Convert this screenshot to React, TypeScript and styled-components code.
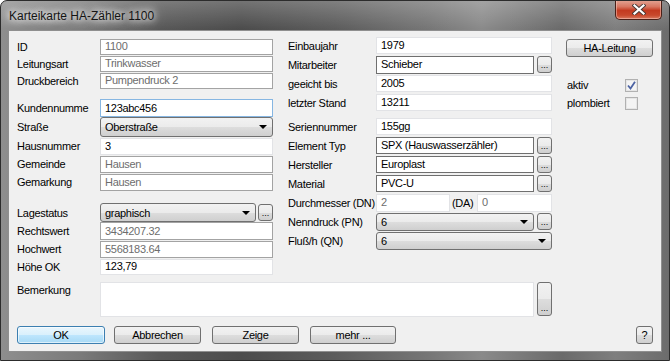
import React from "react";
import styled, { createGlobalStyle, css } from "styled-components";

const GlobalStyle = createGlobalStyle`
  html, body {
    margin: 0;
    padding: 0;
    background: #ffffff;
  }
  body {
    font-family: "Liberation Sans", Arial, sans-serif;
    font-size: 11px;
    letter-spacing: -0.3px;
    color: #000;
  }
`;

const win7Gradient = css`
  background: linear-gradient(
    180deg,
    #f2f2f2 0%,
    #ebebeb 50%,
    #dddddd 51%,
    #cfcfcf 100%
  );
`;

const WindowFrame = styled.div`
  box-sizing: border-box;
  width: 670px;
  height: 361px;
  border: 1px solid #2c2c2c;
  border-radius: 7px 7px 0 0;
  background: linear-gradient(
      180deg,
      rgba(255, 255, 255, 0.22) 0px,
      rgba(255, 255, 255, 0) 28px
    ),
    linear-gradient(
      90deg,
      #8e8e8e 0%,
      #7a7a7a 12%,
      #575757 24%,
      #4c4c4c 36%,
      #5c5c5c 50%,
      #767676 64%,
      #8a8a8a 72%,
      #6a6a6a 84%,
      #7e7e7e 92%,
      #6c6c6c 100%
    );
  display: flex;
  flex-direction: column;
  padding: 0 7px 8px 7px;
  overflow: hidden;
`;

const TitleBar = styled.div`
  height: 29px;
  display: flex;
  align-items: flex-start;
`;

const TitleText = styled.div`
  font-family: "Liberation Sans", Arial, sans-serif;
  font-size: 12px;
  letter-spacing: 0;
  color: #141414;
  padding: 8px 0 0 1px;
  text-shadow: 0 0 6px #ffffff, 0 0 10px rgba(255, 255, 255, 0.9),
    0 0 14px rgba(255, 255, 255, 0.7);
`;

const CloseButton = styled.div`
  margin-left: auto;
  margin-top: -1px;
  width: 47px;
  height: 20px;
  box-sizing: border-box;
  border: 1px solid #4a2018;
  border-top: none;
  border-radius: 0 0 5px 5px;
  background: linear-gradient(
    180deg,
    #e3a696 0%,
    #d77762 35%,
    #c33a20 55%,
    #c8482c 80%,
    #d87a60 100%
  );
  box-shadow: inset 0 0 0 1px rgba(255, 220, 210, 0.45);
  display: flex;
  align-items: center;
  justify-content: center;
`;

const Client = styled.div`
  flex: 1;
  box-sizing: border-box;
  background: #f0f0f0;
  border: 1px solid #8f8f8f;
  padding: 5px 8px 0 8px;
  display: flex;
  flex-direction: column;
`;

const TopArea = styled.div`
  display: flex;
  align-items: flex-start;
`;

const Column = styled.div<{ $w: number; $ml?: number }>`
  width: ${(p) => p.$w}px;
  margin-left: ${(p) => p.$ml ?? 0}px;
  display: flex;
  flex-direction: column;
`;

const Spacer = styled.div<{ $h: number }>`
  height: ${(p) => p.$h}px;
  flex: none;
`;

const Row = styled.div<{ $h: number }>`
  height: ${(p) => p.$h}px;
  display: flex;
  align-items: center;
`;

const Label = styled.div<{ $w: number }>`
  width: ${(p) => p.$w}px;
  flex: none;
  white-space: nowrap;
`;

type FieldKind = "locked" | "plain" | "focus" | "dark";

const fieldBorders: Record<FieldKind, string> = {
  locked: "#a3a3a3",
  plain: "#e2e3e6",
  focus: "#86b6e2",
  dark: "#6f6f6f",
};

const Field = styled.div<{ $kind: FieldKind; $h: number; $w?: number }>`
  box-sizing: border-box;
  ${(p) => (p.$w ? `width: ${p.$w}px; flex: none;` : "flex: 1;")}
  height: ${(p) => p.$h}px;
  background: #ffffff;
  border: 1px solid ${(p) => fieldBorders[p.$kind]};
  color: ${(p) => (p.$kind === "locked" ? "#6d6d6d" : "#000")};
  padding: 0 0 1px 4px;
  display: flex;
  align-items: center;
  white-space: nowrap;
  overflow: hidden;
`;

const GrayText = styled.span`
  color: #6d6d6d;
`;

const Combo = styled.div<{ $h: number }>`
  box-sizing: border-box;
  flex: 1;
  height: ${(p) => p.$h}px;
  border: 1px solid #707070;
  border-radius: 3px;
  ${win7Gradient}
  padding: 0 0 0 4px;
  display: flex;
  align-items: center;
  white-space: nowrap;
`;

const Arrow = styled.span`
  margin-left: auto;
  margin-right: 5px;
  width: 0;
  height: 0;
  border-left: 4px solid transparent;
  border-right: 4px solid transparent;
  border-top: 4px solid #000;
`;

const DotsButton = styled.div<{ $h: number; $gap?: number }>`
  box-sizing: border-box;
  flex: none;
  width: 15px;
  height: ${(p) => p.$h}px;
  margin-left: ${(p) => p.$gap ?? 3}px;
  border: 1px solid #707070;
  border-radius: 3px;
  ${win7Gradient}
  display: flex;
  align-items: flex-end;
  justify-content: center;
  font-size: 9px;
  letter-spacing: 0;
  line-height: 9px;
  padding-bottom: 2px;
  color: #000;
`;

const PushButton = styled.div<{ $w: number; $primary?: boolean; $ml?: number }>`
  box-sizing: border-box;
  flex: none;
  width: ${(p) => p.$w}px;
  height: 18px;
  margin-left: ${(p) => p.$ml ?? 0}px;
  border: 1px solid ${(p) => (p.$primary ? "#3c7fb1" : "#707070")};
  border-radius: 3px;
  ${(p) =>
    p.$primary
      ? css`
          background: linear-gradient(
            180deg,
            #eaf6fd 0%,
            #d9f0fc 50%,
            #bee6fd 51%,
            #a7d9f5 100%
          );
          box-shadow: inset 0 0 0 1px rgba(255, 255, 255, 0.6);
        `
      : win7Gradient}
  display: flex;
  align-items: center;
  justify-content: center;
  padding-bottom: 1px;
  white-space: nowrap;
`;

const CheckRow = styled.div`
  height: 18px;
  display: flex;
  align-items: center;
  padding-left: 1px;
`;

const CheckBox = styled.div`
  box-sizing: border-box;
  margin-left: auto;
  margin-right: 15px;
  width: 13px;
  height: 13px;
  border: 1px solid #b1b1b1;
  background: #f4f4f4;
  box-shadow: inset 0 0 0 1px #e6e6e6;
  display: flex;
  align-items: center;
  justify-content: center;
`;

const RemarkRow = styled.div`
  display: flex;
  align-items: flex-start;
  margin-top: 7px;
  height: 35px;
`;

const RemarkLabel = styled.div`
  width: 83px;
  flex: none;
  padding-top: 2px;
`;

const ButtonBar = styled.div`
  display: flex;
  align-items: center;
  margin-top: 9px;
`;

const SmallCombo = ({ text, h }: { text: string; h: number }) => (
  <Combo $h={h}>
    {text}
    <Arrow />
  </Combo>
);

const Dots = ({ h, gap }: { h: number; gap?: number }) => (
  <DotsButton $h={h} $gap={gap}>
    ...
  </DotsButton>
);

const L = 83;
const M = 88;

export default function App() {
  return (
    <>
      <GlobalStyle />
      <WindowFrame>
        <TitleBar>
          <TitleText>Karteikarte HA-Zähler 1100</TitleText>
          <CloseButton>
            <svg width="14" height="11" viewBox="0 0 14 11">
              <path
                d="M2.5 1.5 L11.5 9.5 M11.5 1.5 L2.5 9.5"
                stroke="#4a3a36"
                strokeWidth="4"
                strokeLinecap="square"
              />
              <path
                d="M2.5 1.5 L11.5 9.5 M11.5 1.5 L2.5 9.5"
                stroke="#ffffff"
                strokeWidth="2.2"
                strokeLinecap="square"
              />
            </svg>
          </CloseButton>
        </TitleBar>
        <Client>
          <TopArea>
            <Column $w={256}>
              <Spacer $h={2} />
              <Row $h={17}>
                <Label $w={L}>ID</Label>
                <Field $kind="locked" $h={16}>1100</Field>
              </Row>
              <Row $h={17}>
                <Label $w={L}>Leitungsart</Label>
                <Field $kind="locked" $h={16}>Trinkwasser</Field>
              </Row>
              <Row $h={17}>
                <Label $w={L}>Druckbereich</Label>
                <Field $kind="locked" $h={16}>Pumpendruck 2</Field>
              </Row>
              <Spacer $h={10} />
              <Row $h={18}>
                <Label $w={L}>Kundennumme</Label>
                <Field $kind="focus" $h={18}>123abc456</Field>
              </Row>
              <Row $h={20}>
                <Label $w={L}>Straße</Label>
                <SmallCombo text="Oberstraße" h={20} />
              </Row>
              <Row $h={18}>
                <Label $w={L}>Hausnummer</Label>
                <Field $kind="plain" $h={17}>3</Field>
              </Row>
              <Row $h={18}>
                <Label $w={L}>Gemeinde</Label>
                <Field $kind="locked" $h={17}>Hausen</Field>
              </Row>
              <Row $h={18}>
                <Label $w={L}>Gemarkung</Label>
                <Field $kind="locked" $h={17}>Hausen</Field>
              </Row>
              <Spacer $h={12} />
              <Row $h={19}>
                <Label $w={L}>Lagestatus</Label>
                <SmallCombo text="graphisch" h={19} />
                <Dots h={17} gap={2} />
              </Row>
              <Row $h={18}>
                <Label $w={L}>Rechtswert</Label>
                <Field $kind="locked" $h={18}>3434207.32</Field>
              </Row>
              <Row $h={18}>
                <Label $w={L}>Hochwert</Label>
                <Field $kind="locked" $h={17}>5568183.64</Field>
              </Row>
              <Row $h={17}>
                <Label $w={L}>Höhe OK</Label>
                <Field $kind="plain" $h={16}>123,79</Field>
              </Row>
            </Column>

            <Column $w={264} $ml={15}>
              <Row $h={19}>
                <Label $w={M}>Einbaujahr</Label>
                <Field $kind="plain" $h={17}>1979</Field>
              </Row>
              <Row $h={19}>
                <Label $w={M}>Mitarbeiter</Label>
                <Field $kind="dark" $h={18}>Schieber</Field>
                <Dots h={17} />
              </Row>
              <Row $h={19}>
                <Label $w={M}>geeicht bis</Label>
                <Field $kind="plain" $h={17}>2005</Field>
              </Row>
              <Row $h={19}>
                <Label $w={M}>letzter Stand</Label>
                <Field $kind="plain" $h={17}>13211</Field>
              </Row>
              <Spacer $h={5} />
              <Row $h={19}>
                <Label $w={M}>Seriennummer</Label>
                <Field $kind="plain" $h={17}>155gg</Field>
              </Row>
              <Row $h={19}>
                <Label $w={M}>Element Typ</Label>
                <Field $kind="dark" $h={17}>SPX (Hauswasserzähler)</Field>
                <Dots h={17} />
              </Row>
              <Row $h={19}>
                <Label $w={M}>Hersteller</Label>
                <Field $kind="dark" $h={17}>Europlast</Field>
                <Dots h={17} />
              </Row>
              <Row $h={19}>
                <Label $w={M}>Material</Label>
                <Field $kind="dark" $h={17}>PVC-U</Field>
                <Dots h={17} />
              </Row>
              <Row $h={19}>
                <Label $w={M}>Durchmesser (DN)</Label>
                <Field $kind="plain" $h={18} $w={74}>
                  <GrayText>2</GrayText>
                </Field>
                <Label $w={25} style={{ paddingLeft: 2 }}>
                  (DA)
                </Label>
                <Field $kind="plain" $h={18}>
                  <GrayText>0</GrayText>
                </Field>
              </Row>
              <Row $h={19}>
                <Label $w={M}>Nenndruck (PN)</Label>
                <SmallCombo text="6" h={18} />
                <Dots h={17} />
              </Row>
              <Row $h={19}>
                <Label $w={M}>Fluß/h (QN)</Label>
                <SmallCombo text="6" h={18} />
              </Row>
            </Column>

            <Column $w={87} $ml={14}>
              <Spacer $h={3} />
              <PushButton $w={87}>HA-Leitung</PushButton>
              <Spacer $h={19} />
              <CheckRow>
                aktiv
                <CheckBox>
                  <svg width="9" height="9" viewBox="0 0 9 9">
                    <path
                      d="M1 4.5 L3.5 7.5 L8 0.8"
                      fill="none"
                      stroke="#4d63a3"
                      strokeWidth="1.8"
                    />
                  </svg>
                </CheckBox>
              </CheckRow>
              <CheckRow>
                plombiert
                <CheckBox />
              </CheckRow>
            </Column>
          </TopArea>

          <RemarkRow>
            <RemarkLabel>Bemerkung</RemarkLabel>
            <Field $kind="plain" $h={35} $w={434} />
            <Dots h={34} />
          </RemarkRow>

          <ButtonBar>
            <PushButton $w={88} $primary>
              OK
            </PushButton>
            <PushButton $w={87} $ml={9}>
              Abbrechen
            </PushButton>
            <PushButton $w={87} $ml={11}>
              Zeige
            </PushButton>
            <PushButton $w={86} $ml={11}>
              mehr ...
            </PushButton>
            <PushButton $w={17} style={{ marginLeft: "auto" }}>
              ?
            </PushButton>
          </ButtonBar>
        </Client>
      </WindowFrame>
    </>
  );
}
